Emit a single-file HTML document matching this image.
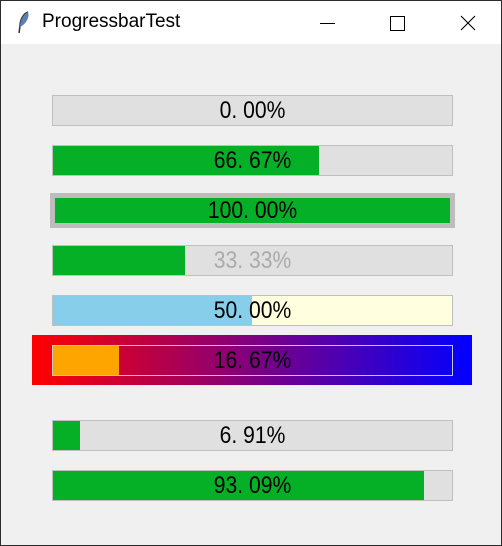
<!DOCTYPE html>
<html><head><style>
*{margin:0;padding:0;box-sizing:border-box}
body{width:502px;height:546px;background:#f0f0f0;position:relative;overflow:hidden;font-family:"Liberation Sans","Noto Sans CJK SC",sans-serif}
.frame{position:absolute;left:0;top:0;width:502px;height:546px;border:1px solid #2b2b2b;border-top:none}
.title{position:absolute;left:1px;top:0;width:500px;height:44px;background:#fff;border-top:1px solid #2b2b2b}
.title span{position:absolute;left:41px;top:10px;font-size:19px;color:#000}
.bar{position:absolute;left:52px;width:401px;height:31px;background:#e0e0e0;border:1px solid #bfbfbf}
.fill{position:absolute;left:0;top:0;bottom:0;background:#05b027}
.lbl{position:absolute;left:0;right:0;top:0;line-height:29px;text-align:center;font-size:24px;color:#000;transform:scaleX(0.88)}
</style></head><body>
<div class="title">
<svg style="position:absolute;left:16px;top:10px" width="14" height="24" viewBox="0 0 14 24"><path d="M11 1C6 3 3 9 3 15L2 22" stroke="#333" stroke-width="1.5" fill="none"/><path d="M11 1C13 6 9 13 3 16C3 9 6 4 11 1Z" fill="#5b7fb5"/></svg>
<span>ProgressbarTest</span>
<div style="position:absolute;left:319px;top:22px;width:15px;height:1px;background:#000"></div>
<div style="position:absolute;left:389px;top:15px;width:15px;height:15px;border:1px solid #000"></div>
<svg style="position:absolute;left:459px;top:14px" width="16" height="16"><path d="M1 1L15 15M15 1L1 15" stroke="#000" stroke-width="1.1"/></svg>
</div>
<div class="frame"></div>

<div class="bar" style="top:95px"><div class="lbl">0. 00%</div></div>
<div class="bar" style="top:145px"><div class="fill" style="width:266px"></div><div class="lbl">66. 67%</div></div>
<div class="bar" style="top:193px;left:50px;width:405px;height:35px;border:5px solid #bdbdbd;background:#05b027"><div class="lbl" style="line-height:25px">100. 00%</div></div>
<div class="bar" style="top:245px"><div class="fill" style="width:132px"></div><div class="lbl" style="color:#aaa">33. 33%</div></div>
<div class="bar" style="top:295px;background:#ffffe0"><div class="fill" style="width:199px;background:#87ceeb"></div><div class="lbl">50. 00%</div></div>
<div style="position:absolute;left:32px;top:335px;width:440px;height:50px;background:linear-gradient(to right,#ff0000,#0000ff)"></div>
<div class="bar" style="top:345px;background:transparent;border-color:#c8c8c8"><div class="fill" style="width:66px;background:#ffa500"></div><div class="lbl">16. 67%</div></div>
<div class="bar" style="top:420px"><div class="fill" style="width:27px"></div><div class="lbl">6. 91%</div></div>
<div class="bar" style="top:470px"><div class="fill" style="width:371px"></div><div class="lbl">93. 09%</div></div>
</body></html>
